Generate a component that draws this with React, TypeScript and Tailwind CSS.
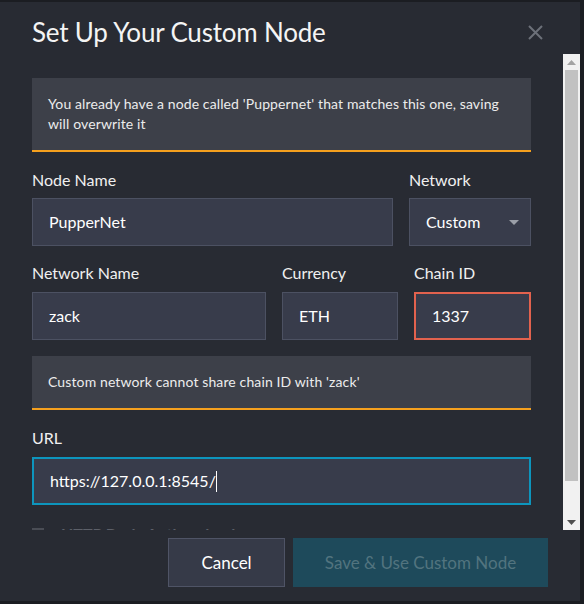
import { ReactNode } from 'react';

const font = { fontFamily: 'Lato, "Open Sans", sans-serif' };

function Notice({ children }: { children: ReactNode }) {
  return (
    <div className="bg-[#3d4049] border-b-2 border-[#f5a01e] px-4 py-4 text-[14px] leading-[20px] tracking-[0.12px] text-[#ececec]">
      {children}
    </div>
  );
}

function Label({ children, className = '' }: { children: ReactNode; className?: string }) {
  return <div className={`text-[16px] leading-[20px] text-[#f0f0f0] ${className}`}>{children}</div>;
}

function Field({
  value,
  className = '',
  border = 'border border-[#4c5162]',
}: {
  value: ReactNode;
  className?: string;
  border?: string;
}) {
  return (
    <div
      className={`flex items-center h-[48px] bg-[#383c4b] ${border} px-4 text-[16px] text-white ${className}`}
    >
      {value}
    </div>
  );
}

export default function App() {
  return (
    <div className="w-[584px] h-[604px] bg-[#1b1d22] pt-[2px] flex overflow-hidden" style={font}>
      <div className="w-[580px] h-[599px] bg-[#282b33] flex flex-col">
        {/* Шапка */}
        <div className="h-[52px] flex items-start justify-between pl-8 pr-[37px] pt-[14px]">
          <h1 className="text-[26px] leading-[32px] text-[#f4f4f4] tracking-[-0.2px]">
            Set Up Your Custom Node
          </h1>
          <svg width="15" height="15" viewBox="0 0 15 15" className="mt-[9px]">
            <path d="M1 1 L14 14 M14 1 L1 14" stroke="#6c7079" strokeWidth="2" />
          </svg>
        </div>

        {/* Прокручиваемая часть */}
        <div className="flex h-[476px]">
          <div className="w-[563px] overflow-hidden px-8 pt-6">
            <Notice>
              You already have a node called 'Puppernet' that matches this one, saving will overwrite it
            </Notice>

            <div className="flex gap-4 mt-[18px]">
              <div className="w-[361px]">
                <Label className="mb-2">Node Name</Label>
                <Field value="PupperNet" />
              </div>
              <div className="w-[122px]">
                <Label className="mb-2">Network</Label>
                <Field
                  className="justify-between pr-[11px]"
                  value={
                    <>
                      <span>Custom</span>
                      <svg width="10" height="5" viewBox="0 0 10 5">
                        <path d="M0 0 L10 0 L5 5 Z" fill="#9b9fa8" />
                      </svg>
                    </>
                  }
                />
              </div>
            </div>

            <div className="flex gap-4 mt-[17px]">
              <div className="w-[234px]">
                <Label className="mb-[9px]">Network Name</Label>
                <Field value="zack" />
              </div>
              <div className="w-[116px]">
                <Label className="mb-[9px]">Currency</Label>
                <Field value="ETH" />
              </div>
              <div className="w-[117px]">
                <Label className="mb-[9px]">Chain ID</Label>
                <Field value="1337" border="border-2 border-[#e2624e]" />
              </div>
            </div>

            <div className="mt-4">
              <Notice>Custom network cannot share chain ID with 'zack'</Notice>
            </div>

            <Label className="mt-[18px] mb-[9px]">URL</Label>
            <Field
              value={
                <>
                  <span>https://127.0.0.1:8545/</span>
                  <span className="w-px h-[21px] bg-white" />
                </>
              }
              border="border-2 border-[#0d95bd]"
              className="h-[47px]"
            />

            <div className="flex items-center gap-[17px] mt-[19px] h-[20px]">
              <span className="w-3 h-3 bg-[#4a4d55]" />
              <span className="text-[16px] text-[#5d6069] font-bold">HTTP Basic Authentication</span>
            </div>
          </div>

          {/* Полоса прокрутки */}
          <div className="w-[17px] bg-[#f1f1f1] flex flex-col">
            <div className="h-4 flex items-center justify-center">
              <svg width="9" height="5" viewBox="0 0 9 5">
                <path d="M0 5 L9 5 L4.5 0 Z" fill="#a3a3a3" />
              </svg>
            </div>
            <div className="mx-[2px] h-[411px] bg-[#c1c1c1]" />
            <div className="flex-1" />
            <div className="h-4 flex items-center justify-center">
              <svg width="9" height="5" viewBox="0 0 9 5">
                <path d="M0 0 L9 0 L4.5 5 Z" fill="#505050" />
              </svg>
            </div>
          </div>
        </div>

        {/* Кнопки */}
        <div className="flex justify-end gap-2 pt-2 pr-[32px]">
          <button
            type="button"
            className="w-[117px] h-[49px] bg-[#363a48] border border-[#4f5466] text-[17px] text-white"
          >
            Cancel
          </button>
          <button
            type="button"
            className="w-[255px] h-[49px] bg-[#1e4a5b] text-[17px] text-[#52747f]"
          >
            Save &amp; Use Custom Node
          </button>
        </div>
      </div>
    </div>
  );
}
